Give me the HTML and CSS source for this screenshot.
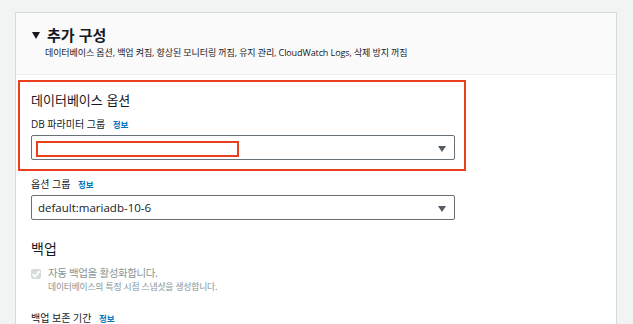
FILE: index.html
```html
<!DOCTYPE html>
<html lang="ko">
<head>
<meta charset="utf-8">
<link rel="stylesheet" href="styles.css">
</head>
<body>
<div class="panel">
  <div class="panel-head">
    <div class="head-title"><span class="caret"></span><span>추가 구성</span></div>
    <div class="head-sub">데이터베이스 옵션, 백업 켜짐, 향상된 모니터링 꺼짐, 유지 관리, CloudWatch Logs, 삭제 방지 꺼짐</div>
  </div>
  <div class="panel-body">
    <div class="section-title first">데이터베이스 옵션</div>
    <div class="field-label">DB 파라미터 그룹 <a class="info">정보</a></div>
    <div class="select"><span class="select-value"></span><span class="arrow"></span></div>
    <div class="field-label gap">옵션 그룹 <a class="info">정보</a></div>
    <div class="select"><span class="select-value">default:mariadb-10-6</span><span class="arrow"></span></div>
    <div class="section-title backup">백업</div>
    <div class="check-row">
      <span class="checkbox"><svg width="10" height="10" viewBox="0 0 10 10"><path d="M1.5 5.2 L4 7.6 L8.6 2.2" fill="none" stroke="#fff" stroke-width="1.8"/></svg></span>
      <div>
        <div class="check-label">자동 백업을 활성화합니다.</div>
        <div class="check-desc">데이터베이스의 특정 시점 스냅샷을 생성합니다.</div>
      </div>
    </div>
    <div class="field-label retention">백업 보존 기간 <a class="info">정보</a></div>
  </div>
  <div class="mark mark-outer"></div>
  <div class="mark mark-inner"></div>
</div>
</body>
</html>
```

FILE: styles.css
```css
html, body {
  margin: 0;
  padding: 0;
  background: #f2f3f3;
  font-family: "Open Sans", "Noto Sans CJK KR", sans-serif;
  color: #16191f;
  overflow: hidden;
  height: 324px;
}
.panel {
  position: relative;
  margin: 12px 0 0 15px;
  width: 600px;
  height: 312px;
  overflow: hidden;
  background: #fff;
  border: 1px solid #d5dbdb;
  border-bottom: none;
}
.panel-head {
  background: #fafafa;
  border-bottom: 1px solid #eaeded;
  height: 62px;
  box-sizing: border-box;
  padding: 13px 15px 0 15px;
}
.head-title {
  display: flex;
  align-items: center;
  font-family: "Noto Sans CJK KR", sans-serif;
  font-weight: 700;
  font-size: 15px;
  line-height: 18px;
  height: 18px;
}
.caret {
  width: 0;
  height: 0;
  border-left: 4px solid transparent;
  border-right: 4px solid transparent;
  border-top: 7px solid #16191f;
  margin: 1px 7px 0 1px;
}
.head-sub {
  font-family: "Open Sans", "Noto Sans CJK KR", sans-serif;
  font-size: 9px;
  line-height: 12px;
  color: #16191f;
  margin: 3px 0 0 14px;
  letter-spacing: -0.1px;
}
.panel-body {
  padding: 0 15px;
}
.section-title {
  font-family: "Noto Sans CJK KR", sans-serif;
  font-size: 13px;
  line-height: 18px;
  color: #16191f;
}
.section-title.first {
  margin-top: 16px;
}
.section-title.backup {
  margin-top: 19px;
  font-size: 14px;
}
.field-label {
  font-family: "Open Sans", "Noto Sans CJK KR", sans-serif;
  font-size: 10px;
  line-height: 14px;
  margin-top: 8px;
  color: #16191f;
}
.field-label.gap {
  margin-top: 17px;
}
.field-label.retention {
  margin-top: 18px;
}
.info {
  color: #0073bb;
  font-weight: 700;
  font-size: 8.5px;
  margin-left: 5px;
}
.select {
  display: flex;
  align-items: center;
  justify-content: space-between;
  box-sizing: border-box;
  width: 424px;
  height: 25px;
  margin-top: 3px;
  border: 1px solid #687078;
  border-radius: 2px;
  padding: 0 8px 0 6px;
}
.select-value {
  font-family: "Open Sans", sans-serif;
  font-size: 11.5px;
  color: #16191f;
}
.arrow {
  width: 0;
  height: 0;
  border-left: 4px solid transparent;
  border-right: 4px solid transparent;
  border-top: 6px solid #545b64;
  margin-top: 2px;
}
.check-row {
  display: flex;
  align-items: flex-start;
  margin-top: 8px;
}
.checkbox {
  display: flex;
  align-items: center;
  justify-content: center;
  width: 10px;
  height: 10px;
  background: #d5dbdb;
  border-radius: 2px;
  margin: 4px 7px 0 0;
}
.check-label {
  font-family: "Noto Sans CJK KR", sans-serif;
  font-size: 10.5px;
  letter-spacing: -0.4px;
  line-height: 16px;
  color: #879596;
}
.check-desc {
  font-family: "Noto Sans CJK KR", sans-serif;
  font-size: 8.8px;
  letter-spacing: -0.2px;
  line-height: 12px;
  color: #879596;
}
.mark {
  position: absolute;
  border: 2px solid #e8401c;
  box-sizing: border-box;
}
.mark-outer {
  left: 2px;
  top: 67px;
  width: 448px;
  height: 91px;
}
.mark-inner {
  left: 20px;
  top: 128px;
  width: 203px;
  height: 16px;
}
```
